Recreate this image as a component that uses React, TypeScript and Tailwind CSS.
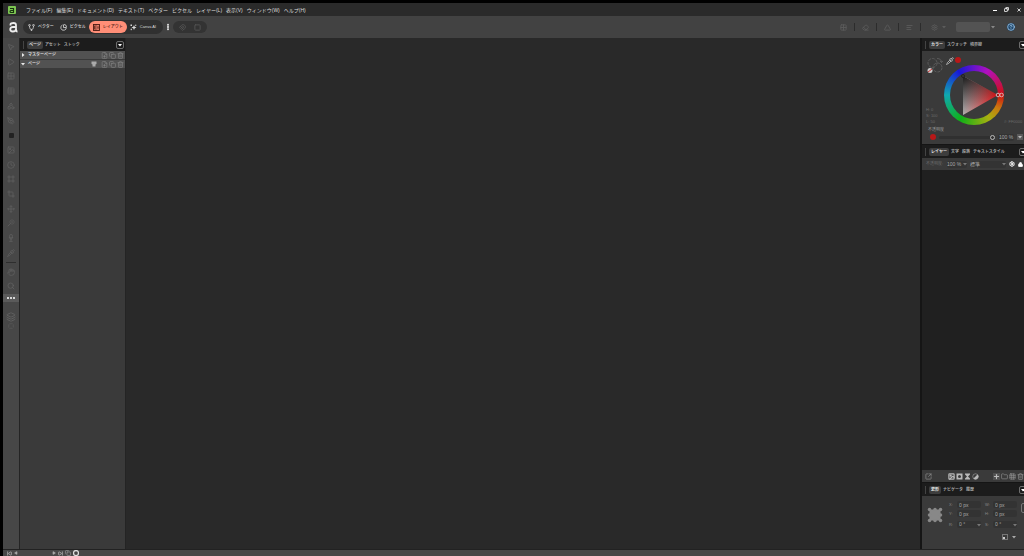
import { useState } from "react";
import type { ReactNode } from "react";
import clsx from "clsx";
import {
  AlignLeft, Circle, CircleHelp, Clock, Copy, Crop, EllipsisVertical, Eraser, FilePlus, Frame, Grid2x2, Grid3x3,
  Hand, Image, Layers, Magnet, MousePointer2, Move, PenTool, Pipette, Play, Search, Shapes, SkipBack, SkipForward,
  Square, SquareArrowOutUpRight, SquareDashed, Table, Trash2, Triangle, Wine, Wand, Lock, Plus, Folder, Settings,
} from "lucide-react";

const MENUS = [
  "ファイル(F)", "編集(E)", "ドキュメント(D)", "テキスト(T)", "ベクター",
  "ピクセル", "レイヤー(L)", "表示(V)", "ウィンドウ(W)", "ヘルプ(H)",
];

const TOOLS = [
  { label: "移動", icon: MousePointer2 },
  { label: "ノード", icon: Play },
  { label: "フレームテキスト", icon: Grid2x2 },
  { label: "表", icon: Table },
  { label: "ベクター", icon: Shapes },
  { label: "ペン", icon: PenTool },
  { label: "長方形", icon: null },
  { label: "画像枠", icon: Image },
  { label: "楕円枠", icon: Clock },
  { label: "配置", icon: Frame },
  { label: "切り抜き", icon: Crop },
  { label: "変形", icon: Move },
  { label: "塗りつぶし", icon: Wand },
  { label: "透明", icon: Wine },
  { label: "スポイト", icon: Pipette },
];

function Caret({ className }: { className?: string }) {
  return (
    <svg viewBox="0 0 8 8" className={clsx("size-1 shrink-0", className)} fill="currentColor">
      <path d="M0 2h8L4 7Z" />
    </svg>
  );
}

function DropButton({ label }: { label: string }) {
  return (
    <button aria-label={label} className="flex size-2 shrink-0 items-center justify-center rounded-xs border border-[#6e6e6e] text-white">
      <Caret />
    </button>
  );
}

function PanelTabs({ tabs, label }: { tabs: string[]; label: string }) {
  const [active, setActive] = useState(tabs[0]);
  return (
    <div className="flex h-[13px] shrink-0 items-center bg-[#1c1c1c] pr-px pl-[3px]">
      <span className="mr-[3px] h-2 w-px bg-[#444]" />
      <div role="tablist" className="flex flex-1 items-center">
        {tabs.map((tab) => (
          <button
            key={tab}
            role="tab"
            aria-selected={tab === active}
            onClick={() => setActive(tab)}
            className={clsx(
              "rounded-xs py-px font-bold whitespace-nowrap",
              tab === active ? "mr-px bg-[#3d3d3d] px-0.5 text-[#e4e4e4]" : "pr-0.5 pl-px text-[#a8a8a8]"
            )}
          >
            {tab}
          </button>
        ))}
      </div>
      <DropButton label={label} />
    </div>
  );
}

function AppIcon() {
  return (
    <svg viewBox="0 0 16 16" className="size-2">
      <rect width="16" height="16" rx="2" fill="#7cc552" />
      <path d="M4 5h7v8H6a2 2 0 0 1 0-4h5" fill="none" stroke="#17330d" strokeWidth="2.2" />
    </svg>
  );
}

function Logo() {
  return (
    <svg viewBox="0 0 18 22" className="h-[11px] w-[9px]">
      <path d="M3 7V5c0-2 2-3 6-3s5 1 5 4v9c0 3 1 4 3 4" fill="none" stroke="#eee" strokeWidth="3.6" />
      <path d="M14 10H8c-4 0-5.500 2-5.500 4.500S4 19 7.500 19s6.500-2 6.500-5" fill="none" stroke="#eee" strokeWidth="3.600" />
    </svg>
  );
}

function VectorIcon() {
  return (
    <svg viewBox="0 0 14 14" className="size-[7px]" fill="none" stroke="currentColor" strokeWidth="1.6">
      <path d="M3 4c0 4 1 6 4 8 3-2 4-4 4-8" />
      <circle cx="3" cy="2.500" r="1.700" />
      <circle cx="11" cy="2.500" r="1.700" />
      <circle cx="7" cy="12" r="1.200" />
    </svg>
  );
}

function PixelIcon() {
  return (
    <svg viewBox="0 0 14 14" className="size-[7px]" fill="none" stroke="currentColor" strokeWidth="1.6">
      <path d="M5 2a5.500 5.500 0 1 0 7.500 4" />
      <path d="M7 1v6h5" />
      <path d="M8 1a5 5 0 0 1 5 5" />
    </svg>
  );
}

function LayoutIcon() {
  return (
    <svg viewBox="0 0 14 14" className="size-[7px]" fill="none" stroke="currentColor" strokeWidth="1.8">
      <rect x="1" y="1" width="12" height="12" />
      <path d="M6 1v12M8.500 4.500h3M8.500 7h3M8.500 9.500h3" strokeWidth="1.400" />
      <path d="M3.500 3v8" strokeWidth="2" />
    </svg>
  );
}

function CanvaIcon() {
  return (
    <svg viewBox="0 0 14 14" className="size-[7px]" fill="currentColor">
      <path d="m8 2 1.500 3.500L13 7 9.500 8.500 8 12 6.500 8.500 3 7l3.500-1.500Z" />
      <path d="M1 1h3v3H1zM1 10l2-1 1 2-2 2zM11 1l2 1-1 2-2-1z" />
    </svg>
  );
}

function ColorWheel() {
  return (
    <div className="relative flex size-15 items-center justify-center rounded-full bg-[conic-gradient(from_90deg,#d01010,#c87a10_8%,#a8b010_16%,#10b018_33%,#10a8b0_50%,#1818d8_66%,#b010c0_83%,#d01010)]">
      <div className="size-12 rounded-full bg-[#3a3a3a]" />
      <svg viewBox="0 0 60 60" className="absolute inset-0 size-15">
        <defs>
          <linearGradient id="sat" x1="0" x2="1">
            <stop offset="0" stopColor="#b4b4b4" />
            <stop offset="1" stopColor="#d80c10" />
          </linearGradient>
          <linearGradient id="shade" gradientUnits="userSpaceOnUse" x1="19" y1="11" x2="36" y2="41">
            <stop offset="0" stopColor="#181818" />
            <stop offset="1" stopColor="#181818" stopOpacity="0" />
          </linearGradient>
        </defs>
        <path d="M19 11 54 30 19 50Z" fill="url(#sat)" />
        <path d="M19 11 54 30 19 50Z" fill="url(#shade)" />
        <circle cx="19" cy="11" r="1.500" fill="none" stroke="#222" />
        <circle cx="54" cy="30" r="1.800" fill="none" stroke="#d8b0b0" />
        <circle cx="57.500" cy="30" r="1.800" fill="none" stroke="#d8b0b0" />
      </svg>
    </div>
  );
}

function ColorPanel() {
  return (
    <section className="h-[93px] shrink-0 bg-[#3a3a3a] px-1 pt-1.5">
      <div className="flex h-[68px]">
        <div className="flex w-[18px] shrink-0 flex-col justify-between">
          <svg viewBox="0 0 36 36" className="ml-px size-[18px]" fill="none">
            <circle cx="11" cy="12" r="9" stroke="#666" strokeWidth="1.500" strokeDasharray="6 2" />
            <circle cx="21" cy="21" r="9" stroke="#666" strokeWidth="1.500" strokeDasharray="6 2" />
            <path d="M20 3c6 0 9 3 9 8m-3-3 3 3 3-3" stroke="#666" strokeWidth="1.500" />
            <circle cx="6" cy="27" r="5" fill="#ccc" />
            <path d="m2 30 8-6" stroke="#c33" strokeWidth="2" />
          </svg>
          <dl className="leading-[6px] text-[#6a6a6a]">
            <div>H: 0</div>
            <div>S: 100</div>
            <div>L: 50</div>
          </dl>
        </div>
        <div className="flex w-15 shrink-0 flex-col">
          <div className="flex h-2 items-start gap-px pl-0.5">
            <button aria-label="カラーピッカー" className="text-[#aaa]"><Pipette className="size-2" strokeWidth={3} /></button>
            <button aria-label="取得した色" className="size-1.5 rounded-full bg-[#b81818]" />
          </div>
          <ColorWheel />
        </div>
        <span className="self-end whitespace-nowrap text-[#6a6a6a]">#: FF0000</span>
      </div>
      <label htmlFor="opacity" className="block pt-0.5 pl-0.5 leading-[6px] text-[#999]">不透明度</label>
      <div className="flex h-2 items-center gap-[3px] pl-1">
        <span className="size-1.5 shrink-0 rounded-full bg-[#b81818]" />
        <input
          id="opacity"
          type="range"
          defaultValue={100}
          className="h-[3px] w-14 shrink-0 appearance-none rounded-full bg-[#303030] [&::-webkit-slider-thumb]:size-[5px] [&::-webkit-slider-thumb]:appearance-none [&::-webkit-slider-thumb]:rounded-full [&::-webkit-slider-thumb]:border [&::-webkit-slider-thumb]:border-[#bbb] [&::-webkit-slider-thumb]:bg-[#333]"
        />
        <input aria-label="不透明度の値" defaultValue="100 %" className="h-[7px] w-4 shrink-0 rounded-xs bg-[#333] pl-px text-[5px] text-[#aaa]" />
        <button aria-label="不透明度の候補" className="flex size-1.5 shrink-0 items-center justify-center bg-[#5a5a5a] text-[#bbb]">
          <Caret />
        </button>
      </div>
    </section>
  );
}

function SmallSelect({ label, value, className }: { label: string; value: string; className: string }) {
  return (
    <span className={clsx("flex items-center rounded-xs bg-[#333]", className)}>
      <select aria-label={label} className="h-[7px] min-w-0 flex-1 appearance-none text-[5px] leading-[7px] text-[#aaa]">
        <option>{value}</option>
      </select>
      <Caret className="text-[#777]" />
    </span>
  );
}

function LayersPanel() {
  return (
    <section className="flex flex-1 flex-col">
      <div className="flex h-3 shrink-0 items-center gap-[3px] bg-[#3a3a3a] pl-1 text-[#6a6a6a]">
        <span className="w-[18px] whitespace-nowrap">不透明度:</span>
        <SmallSelect label="レイヤーの不透明度" value="100 %" className="w-5" />
        <SmallSelect label="描画モード" value="標準" className="w-9" />
        <button aria-label="設定" className="text-white"><Settings className="size-1.5" strokeWidth={4} /></button>
        <button aria-label="ロック" className="text-white"><Lock className="size-[5px]" fill="currentColor" strokeWidth={4} /></button>
      </div>
      <div className="flex-1 bg-[#202020]" />
      <div className="flex h-3 shrink-0 items-center bg-[#3a3a3a] pl-[3px] text-[#999]">
        <button aria-label="書き出し"><SquareArrowOutUpRight className="size-[7px]" /></button>
        <div className="ml-4 flex gap-px text-[#b8b8b8]">
          <button aria-label="画像"><Image className="size-[7px]" strokeWidth={4} /></button>
          <button aria-label="マスク">
            <svg viewBox="0 0 14 14" className="size-[7px]"><path fill="currentColor" fillRule="evenodd" d="M1 1h12v12H1zM7 4a3 3 0 1 0 0 6 3 3 0 0 0 0-6" /></svg>
          </button>
          <button aria-label="フィルター">
            <svg viewBox="0 0 14 14" className="size-[7px]"><path fill="currentColor" d="M2 1h10v2L8 7l4 4v2H2v-2l4-4-4-4Z" /></svg>
          </button>
          <button aria-label="調整">
            <svg viewBox="0 0 14 14" className="size-[7px]"><circle cx="7" cy="7" r="5.500" fill="none" stroke="currentColor" /><path fill="currentColor" d="M11 3a5.500 5.500 0 0 1-8 8Z" /></svg>
          </button>
        </div>
        <div className="ml-3.5 flex gap-px">
          <button aria-label="レイヤーを追加" className="bg-[#505050] text-[#bbb]"><Plus className="size-[7px]" strokeWidth={4} /></button>
          <button aria-label="グループ"><Folder className="size-[7px]" /></button>
          <button aria-label="ピクセルレイヤー"><Grid3x3 className="size-[7px]" /></button>
          <button aria-label="レイヤーを削除"><Trash2 className="size-[7px]" /></button>
        </div>
      </div>
    </section>
  );
}

function Field({ label, value, drop }: { label: string; value: string; drop?: boolean }) {
  return (
    <label className="flex items-center gap-1 text-[#888]">
      <span className="w-1 shrink-0">{label}</span>
      {drop ? (
        <SmallSelect label={label} value={value} className="w-6 pl-0.5" />
      ) : (
        <input defaultValue={value} className="h-[7px] w-6 rounded-xs bg-[#333] pl-0.5 text-[5px] text-[#aaa]" />
      )}
    </label>
  );
}

function TransformPanel() {
  return (
    <section className="h-[53px] shrink-0 bg-[#3a3a3a] pt-[5px]">
      <div className="flex">
        <svg viewBox="0 0 32 32" className="mt-1.5 ml-[5px] size-4 shrink-0" fill="#888">
          <rect x="5" y="5" width="22" height="22" />
          <circle cx="5" cy="5" r="3.500" />
          <circle cx="16" cy="5" r="3.500" />
          <circle cx="27" cy="5" r="3.500" />
          <circle cx="5" cy="16" r="3.500" />
          <circle cx="27" cy="16" r="3.500" />
          <circle cx="5" cy="27" r="3.500" />
          <circle cx="16" cy="27" r="3.500" />
          <circle cx="27" cy="27" r="3.500" />
        </svg>
        <div className="ml-1.5 grid grid-cols-[36px_36px] gap-y-0.5">
          <Field label="X:" value="0 px" />
          <Field label="W:" value="0 px" />
          <Field label="Y:" value="0 px" />
          <Field label="H:" value="0 px" />
          <div className="pt-0.5"><Field label="R:" value="0 °" drop /></div>
          <div className="pt-0.5"><Field label="S:" value="0 °" drop /></div>
        </div>
        <button aria-label="縦横比をリンク" className="mt-0.5 h-2.5 w-1.5 shrink-0 rounded-xs border border-[#777]" />
      </div>
      <div className="mt-1.5 flex items-center gap-1 pl-20 text-[#aaa]">
        <button aria-label="整列" className="flex size-1.5 items-end border border-[#777]">
          <span className="size-0.5 bg-[#ccc]" />
        </button>
        <button aria-label="整列の設定"><Caret /></button>
      </div>
    </section>
  );
}

function PageRow({ label, open, children }: { label: string; open?: boolean; children?: ReactNode }) {
  return (
    <div className="flex h-2 items-center bg-[#525252] pr-px text-[#e8e8e8]">
      <button className="flex flex-1 items-center gap-[3px] pl-px font-medium">
        <Caret className={open ? "" : "-rotate-90"} />
        {label}
      </button>
      {children}
      <div className="flex gap-px text-[#8a8a8a]">
        <button aria-label={`${label}を追加`}><FilePlus className="size-[7px]" /></button>
        <button aria-label={`${label}を複製`}><Copy className="size-[7px]" /></button>
        <button aria-label={`${label}を削除`}><Trash2 className="size-[7px]" /></button>
      </div>
    </div>
  );
}

const PERSONAS = [
  { label: "ベクター", icon: VectorIcon },
  { label: "ピクセル", icon: PixelIcon },
  { label: "レイアウト", icon: LayoutIcon },
  { label: "Canva AI", icon: CanvaIcon },
];

const ACTIONS = [
  { label: "整列", icon: Grid2x2 },
  { label: "変形", icon: Eraser },
  { label: "反転", icon: Triangle },
  { label: "順序", icon: AlignLeft },
];

export default function App() {
  const [persona, setPersona] = useState("レイアウト");

  return (
    <div className="flex h-screen flex-col overflow-hidden bg-black pt-[3px] pl-[3px] font-['Liberation_Sans','Noto_Sans_CJK_JP',sans-serif] text-[4px] leading-[6px] text-[#ccc] select-none">
      <header>
        <div className="flex h-[13px] items-center bg-[#2a2a2a] pl-[5px]">
          <AppIcon />
          <nav className="ml-2.5 flex flex-1 gap-1 text-[5px]">
            {MENUS.map((menu) => (
              <button key={menu} className="whitespace-nowrap text-[#dcdcdc]">{menu}</button>
            ))}
          </nav>
          <div className="flex items-center gap-[7px] pr-0.5 text-white">
            <button aria-label="最小化" className="mt-0.5 h-px w-1 bg-white" />
            <button aria-label="元に戻す"><Copy className="size-[5px] -scale-x-100" strokeWidth={4} /></button>
            <button aria-label="閉じる"><Plus className="size-1.5 rotate-45" strokeWidth={3} /></button>
          </div>
        </div>

        <div className="flex h-[22px] items-center bg-[#424242] pl-1.5">
          <Logo />
          <div className="ml-[5px] flex h-3.5 items-center rounded-full bg-[#303030] pr-1 pl-0.5">
            {PERSONAS.map(({ label, icon: Icon }) => (
              <button
                key={label}
                onClick={() => setPersona(label)}
                className={clsx(
                  "flex h-3 items-center gap-[3px] rounded-full font-medium whitespace-nowrap",
                  persona === label ? "bg-[#ff8e77] px-1 text-[#4a1a12]" : "px-[3px] text-[#dadada]"
                )}
              >
                <Icon />
                {label}
              </button>
            ))}
          </div>
          <button aria-label="その他" className="mx-px text-white"><EllipsisVertical className="size-2" strokeWidth={4} /></button>
          <div className="flex h-3 items-center gap-2 rounded-full bg-[#333] px-1.5 text-[#555]">
            <button aria-label="スナップ"><Magnet className="size-[7px]" strokeWidth={3} /></button>
            <button aria-label="プレビュー"><Square className="size-[7px]" strokeWidth={3} /></button>
          </div>

          <div className="ml-auto flex items-center">
            {ACTIONS.map(({ label, icon: Icon }) => (
              <div key={label} className="flex items-center">
                <button aria-label={label} className="px-[7px] text-[#5c5c5c]"><Icon className="size-[7px]" strokeWidth={3} /></button>
                <span className="h-2 w-px bg-[#2c2c2c]" />
              </div>
            ))}
            <button aria-label="アカウント" className="flex items-center gap-1 px-2.5 text-[#5c5c5c]">
              <Settings className="size-[7px]" strokeWidth={3} />
              <Caret />
            </button>
            <button aria-label="プリセット" className="h-2.5 w-[34px] rounded-xs bg-[#535353]" />
            <Caret className="ml-px text-[#888]" />
            <button aria-label="ヘルプ" className="mr-[9px] ml-3 rounded-full bg-[#214a70] text-[#b8dcf8]"><CircleHelp className="size-2" strokeWidth={2} /></button>
          </div>
        </div>
      </header>

      <main className="flex min-h-0 flex-1">
        <aside className="flex w-4 shrink-0 flex-col items-center bg-[#474747] pt-1 text-[#646464]">
          <div className="flex h-[216px] flex-col justify-between">
            {TOOLS.map(({ label, icon: Icon }) => (
              <button key={label} aria-label={label} className="flex size-2.5 items-center justify-center">
                {Icon ? <Icon className="size-2" /> : <span className="size-[5px] rounded-[1px] bg-[#222]" />}
              </button>
            ))}
          </div>
          <span className="mt-1 h-px w-2.5 bg-[#2e2e2e]" />
          <button aria-label="表示移動" className="mt-[5px]"><Hand className="size-2" /></button>
          <button aria-label="ズーム" className="mt-1.5"><Search className="size-2" /></button>
          <button aria-label="ツールをカスタマイズ" className="mt-1 flex h-2 w-full items-center justify-center gap-px bg-[#5a5a5a]">
            <span className="size-0.5 rounded-full bg-white" />
            <span className="size-0.5 rounded-full bg-white" />
            <span className="size-0.5 rounded-full bg-white" />
          </button>
          <button aria-label="塗りと線" className="mt-2.5"><Layers className="size-2.5" /></button>
          <button aria-label="色なし" className="mt-px"><SquareDashed className="size-1.5" /></button>
        </aside>

        <aside className="w-[107px] shrink-0 border-x border-[#242424] bg-[#3a3a3a]">
          <PanelTabs tabs={["ページ", "アセット", "ストック"]} label="ページパネルの設定" />
          <div className="flex flex-col gap-px">
            <PageRow label="マスターページ" />
            <PageRow label="ページ" open>
              <button aria-label="ページの設定" className="mr-1 text-[#aaa]">
                <svg viewBox="0 0 12 12" className="size-1.5" fill="currentColor"><path d="M1 1h10v5l-2 1v4H3V7L1 6Z" /></svg>
              </button>
            </PageRow>
          </div>
        </aside>

        <div className="flex-1 bg-[#292929]" />

        <aside className="w-[104px] shrink-0 overflow-hidden border-l-2 border-[#151515]">
          <div className="flex h-full w-[106px] flex-col gap-px bg-[#151515]">
            <div>
              <PanelTabs tabs={["カラー", "スウォッチ", "境界線"]} label="カラーパネルの設定" />
              <ColorPanel />
            </div>
            <div className="flex flex-1 flex-col">
              <PanelTabs tabs={["レイヤー", "文字", "段落", "テキストスタイル"]} label="レイヤーパネルの設定" />
              <LayersPanel />
            </div>
            <div>
              <PanelTabs tabs={["変形", "ナビゲータ", "履歴"]} label="変形パネルの設定" />
              <TransformPanel />
            </div>
          </div>
        </aside>
      </main>

      <footer className="flex h-[7px] shrink-0 items-center border-t border-[#222] bg-[#474747] pl-1 text-[#aaa]">
        <button aria-label="最初のページ"><SkipBack className="size-[5px]" strokeWidth={4} /></button>
        <button aria-label="前のページ" className="ml-0.5"><Play className="size-1 rotate-180" fill="currentColor" /></button>
        <button aria-label="次のページ" className="ml-[34px]"><Play className="size-1" fill="currentColor" /></button>
        <button aria-label="最後のページ" className="ml-0.5"><SkipForward className="size-[5px]" strokeWidth={4} /></button>
        <button aria-label="見開き" className="ml-0.5 text-[#888]"><Copy className="size-1.5" strokeWidth={3} /></button>
        <button aria-label="プリフライト" className="ml-0.5 text-[#ddd]"><Circle className="size-1.5" strokeWidth={5} /></button>
      </footer>
    </div>
  );
}
